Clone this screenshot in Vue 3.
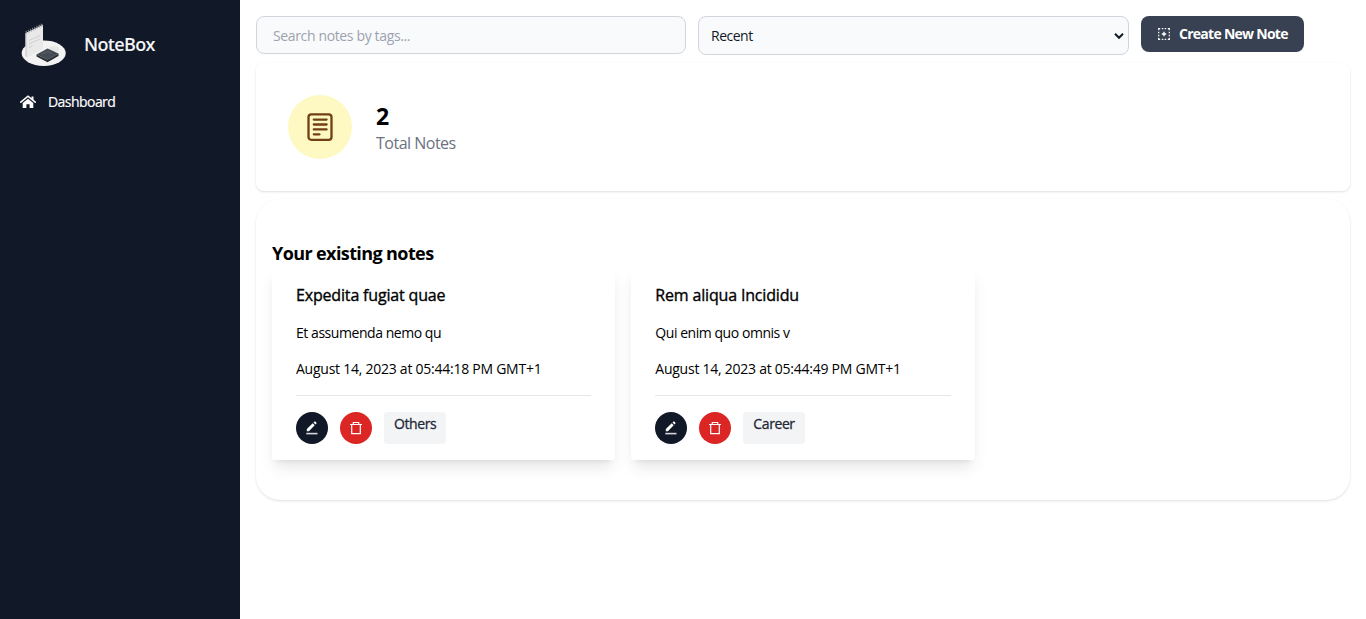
<script setup>
import { ref } from 'vue'

const search = ref('')
const sort = ref('Recent')
const notes = [
  { id: 1, title: 'Expedita fugiat quae', body: 'Et assumenda nemo qu', date: 'August 14, 2023 at 05:44:18 PM GMT+1', tag: 'Others' },
  { id: 2, title: 'Rem aliqua Incididu', body: 'Qui enim quo omnis v', date: 'August 14, 2023 at 05:44:49 PM GMT+1', tag: 'Career' },
]
</script>

<template>
  <div class="app">
    <aside class="sidebar">
      <a class="brand">
        <svg class="logo" width="48" height="48" viewBox="0 0 48 48">
          <ellipse cx="23.7" cy="33.2" rx="22" ry="12.8" fill="#f3f3f3" />
          <ellipse cx="34" cy="29" rx="5.500" ry="2.800" fill="#e6e6e6" />
          <path d="M5.500 13 23 4.500V29L7 37.500 5.500 36z" fill="#e9e9e9" />
          <path d="M5.500 13 6.500 14.500V37.500L5.500 36z" fill="#c4c4c4" />
          <path d="M6 12.500 23 4.500" stroke="#8e9197" stroke-width="3" stroke-dasharray="1 1.400" />
          <path d="M9 20.500 20 15.500M9 24 20 19M9 27.500 13 25.500" stroke="#c2c2c2" stroke-width="1" stroke-dasharray="1.500 .8" />
          <path d="M16.500 34.500 27.500 28.500 38.500 33.500 27.500 39.500z" fill="#454b52" />
          <path d="M16.500 34.500 27.500 39.500 38.500 33.500V36L27.500 42.200 16.500 36.500z" fill="#2b3036" />
          <path d="M22 34.200 27.500 31.500 31.500 33.500" fill="none" stroke="#5b626a" />
        </svg>
        <span class="brand-name">NoteBox</span>
      </a>
      <a class="nav-item">
        <svg width="16" height="16" viewBox="0 0 16 16">
          <path d="M.8 8.200 8 2.200 15.200 8.200" fill="none" stroke="#fff" stroke-width="1.600" stroke-linecap="round" />
          <path d="M11.500 2.500h2v4l-2-1.700zM8 4.700 13.300 9.100V14H9.600V10.300H6.400V14H2.700V9.100z" fill="#fff" />
        </svg>
        <span class="nav-label">Dashboard</span>
      </a>
    </aside>

    <main class="content">
      <div class="toolbar">
        <input v-model="search" class="search" type="text" placeholder="Search notes by tags..." />
        <div class="select-wrap">
          <select v-model="sort" class="select">
            <option>Recent</option>
            <option>Oldest</option>
          </select>
          <svg class="chevron" width="10" height="8" viewBox="0 0 10 8">
            <path d="M1 1.800 5 5.800 9 1.800" fill="none" stroke="#111827" stroke-width="2" />
          </svg>
        </div>
        <button class="create">
          <svg width="14" height="14" viewBox="0 0 14 14" fill="none" stroke="#fff" stroke-width="1.200">
            <path d="M1.700 3.200V1.700h1.500M4.800 1.700h1.500M7.700 1.700h1.500M10.800 1.700h1.500v1.500M12.300 4.800v1.500M12.300 7.700v1.500M12.300 10.800v1.500h-1.500M9.200 12.300H7.700M6.300 12.300H4.800M3.200 12.300H1.700v-1.500M1.700 9.200V7.700M1.700 6.300V4.800" />
            <path d="M7 4.800v4.400M4.800 7h4.400" stroke-width="1.400" />
          </svg>
          <span class="create-label">Create New Note</span>
        </button>
      </div>

      <section class="stats">
        <div class="stats-icon">
          <svg width="32" height="32" viewBox="0 0 32 32" fill="none" stroke="#713f12">
            <rect x="4.500" y="3.300" width="23" height="25.500" rx="2.800" stroke-width="2.300" />
            <path d="M9.800 8.600h12.800M9.800 13.500h12.800M9.800 18.400h12.800M9.800 23.300h5.700" stroke-width="2.300" stroke-linecap="round" />
          </svg>
        </div>
        <div>
          <div class="count">{{ notes.length }}</div>
          <div><span class="count-label">Total Notes</span></div>
        </div>
      </section>

      <section class="panel">
        <h2 class="heading"><span>Your existing notes</span></h2>
        <div class="grid">
          <article v-for="note in notes" :key="note.id" class="card">
            <h3 class="title"><span>{{ note.title }}</span></h3>
            <p class="body"><span>{{ note.body }}</span></p>
            <p class="date"><span>{{ note.date }}</span></p>
            <div class="actions">
              <button class="round edit">
                <svg width="14" height="14" viewBox="0 0 14 14">
                  <path d="M1.800 10.200V8.100L7.700 2.300 9.700 4.300 3.900 10.200zM8.500 1.500 9.500.6q.4-.3.800 0l1.100 1.100q.4.400 0 .8l-.9 1z" fill="#fff" />
                  <path d="M1.300 12.600h11.200" stroke="#d5d7da" stroke-width="1.600" />
                </svg>
              </button>
              <button class="round delete">
                <svg width="14" height="14" viewBox="0 0 14 14" fill="none" stroke="#fff" stroke-width="1.200">
                  <path d="M1 3.500h12M4.300 3.300V1.500h5.400V3.300M2.700 3.500V12.600H11.300V3.500" />
                </svg>
              </button>
              <span class="tag"><span>{{ note.tag }}</span></span>
            </div>
          </article>
        </div>
      </section>
    </main>
  </div>
</template>

<style>
body { margin: 0; background: #fff; }
</style>

<style scoped>
* { box-sizing: border-box; }
.app {
  display: flex;
  height: 619px;
  overflow: hidden;
  color: #000;
  font-family: "Open Sans", "Noto Sans", sans-serif;
  font-size: 14px;
}
h2, h3, p { margin: 0; font: inherit; }
button { border: 0; padding: 0; font-family: inherit; }
svg { display: block; flex: none; }
span { white-space: nowrap; }
.sidebar { width: 240px; flex: none; background: #111827; color: #fff; }
.brand { display: flex; align-items: center; gap: 16px; height: 48px; margin: 20px 0 0 20px; }
.brand-name { font-size: 18px; font-weight: 600; color: #f3f4f6; letter-spacing: -.65px; line-height: 28px; }
.nav-item { display: flex; align-items: center; gap: 12px; height: 20px; margin: 24px 0 0 20px; }
.nav-label { font-size: 14px; line-height: 20px; letter-spacing: -.55px; -webkit-text-stroke: .2px; }
.content { flex: 1; min-width: 0; padding: 16px; }
.toolbar { display: flex; align-items: flex-start; gap: 12px; height: 39px; }
.search {
  width: 430px; height: 38px; padding: 0 16px; border: 1px solid #d1d5db; border-radius: 8px;
  background: #f9fafb; color: #111827; font: 14px "Open Sans", sans-serif; letter-spacing: -.36px; outline: none;
}
.search::placeholder { color: #9ca3af; opacity: 1; }
.select-wrap { position: relative; width: 431px; height: 39px; }
.select {
  display: block; width: 100%; height: 100%; padding: 0 12px; appearance: none; border: 1px solid #d1d5db; border-radius: 8px;
  background: #f9fafb; color: #111827; font: 14px "Open Sans", sans-serif; letter-spacing: -.5px;
}
.chevron { position: absolute; right: 5px; top: 16px; }
.create {
  display: flex; align-items: center; gap: 8px; width: 163px; height: 36px; padding-left: 16px;
  border-radius: 8px; background: #374151; color: #fff;
}
.create-label { font-size: 14px; font-weight: 700; line-height: 20px; letter-spacing: -.73px; }
.stats {
  display: flex; align-items: center; gap: 24px; height: 128px; margin-top: 8px; padding: 32px;
  border-radius: 8px; box-shadow: 0 1px 3px rgba(0, 0, 0, .1), 0 1px 2px -1px rgba(0, 0, 0, .1);
}
.stats-icon { display: grid; place-items: center; width: 64px; height: 64px; border-radius: 50%; background: #fef9c3; }
.count { font-size: 23px; font-weight: 700; line-height: 30px; padding-bottom: 2px; }
.count-label { color: #6b7280; font-size: 16px; line-height: 20px; letter-spacing: -.5px; }
.panel {
  height: 301px; margin-top: 8px; padding: 40px 16px; border-radius: 24px;
  box-shadow: 0 1px 3px rgba(0, 0, 0, .1), 0 1px 2px -1px rgba(0, 0, 0, .1);
}
.heading { font-size: 18px; font-weight: 700; line-height: 28px; height: 28px; letter-spacing: -.6px; }
.grid { display: grid; grid-template-columns: repeat(3, 1fr); gap: 16px; }
.card {
  height: 193px; padding: 16px 24px; border-radius: 2px; background: #fff;
  box-shadow: 0 10px 15px -3px rgba(0, 0, 0, .1), 0 4px 6px -4px rgba(0, 0, 0, .1);
}
.title { font-size: 16px; line-height: 24px; letter-spacing: -.17px; -webkit-text-stroke: .35px; }
.body, .date { font-size: 14px; line-height: 20px; margin-top: 16px; }
.body { letter-spacing: -.45px; }
.date { letter-spacing: -.25px; }
.actions { display: flex; gap: 12px; margin-top: 16px; padding-top: 16px; border-top: 1px solid #e5e7eb; }
.round { display: grid; place-items: center; width: 32px; height: 32px; border-radius: 50%; }
.edit { background: #111827; }
.delete { background: #dc2626; }
.tag {
  height: 32px; padding: 2px 10px; border-radius: 4px; background: #f3f4f6; color: #1f2937;
  font-size: 14px; line-height: 20px; letter-spacing: -.4px; -webkit-text-stroke: .3px;
}
</style>
